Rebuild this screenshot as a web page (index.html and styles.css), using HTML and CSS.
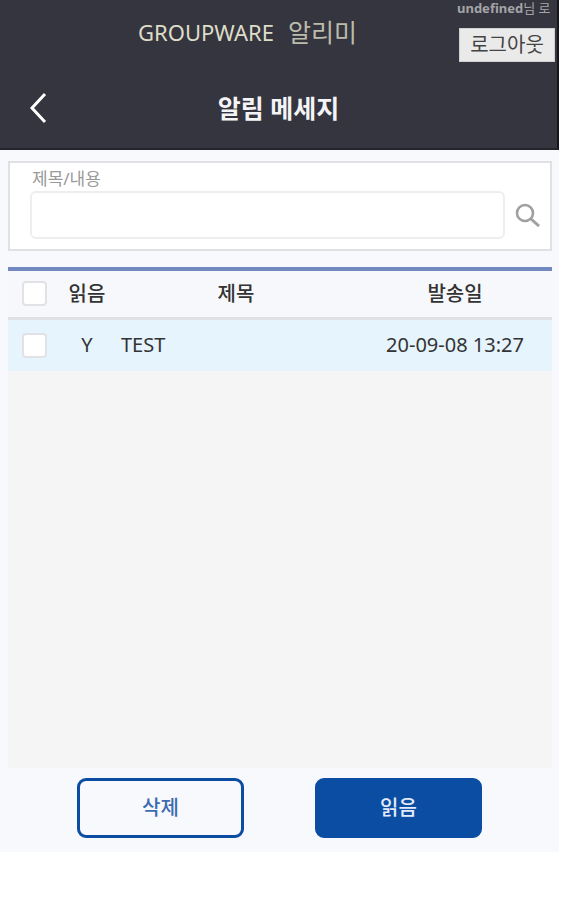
FILE: index.html
```html
<!DOCTYPE html>
<html lang="ko">
<head>
  <meta charset="UTF-8" />
  <meta name="viewport" content="width=device-width, initial-scale=1.0"/>
  <title>GROUPWARE 알리미</title>
  <link rel="stylesheet" href="styles.css">
</head>
<body>

<div class="app">
  <header class="header">
    <div class="top-bar">
      <div class="brand"><span>GROUPWARE</span><span class="brand-sub">알리미</span></div>
      <div class="account">
        <div class="account-name"><b>undefined</b>님 로</div>
        <button type="button" class="logout-button">로그아웃</button>
      </div>
    </div>
    <div class="title-bar">
      <button type="button" class="back-button" aria-label="뒤로">
        <svg width="20" height="32" viewBox="0 0 20 32" fill="none" stroke="#ffffff" stroke-width="3">
          <path d="M17 2 L4 16 L17 30"/>
        </svg>
      </button>
      <h1>알림 메세지</h1>
    </div>
  </header>

  <main class="content">
    <form class="search-box">
      <label for="keyword">제목/내용</label>
      <div class="search-row">
        <input type="text" id="keyword">
        <button type="button" class="search-button" aria-label="검색">
          <svg width="26" height="24" viewBox="0 0 26 24" fill="none" stroke="#a0a0a0">
            <circle cx="10" cy="10" r="8" stroke-width="2.6"/>
            <path d="M15.5 15.5 L24 23" stroke-width="3"/>
          </svg>
        </button>
      </div>
    </form>

    <div class="list">
      <table class="message-table">
        <thead>
          <tr>
            <th class="col-check"><input type="checkbox" aria-label="전체 선택"></th>
            <th class="col-read">읽음</th>
            <th>제목</th>
            <th class="col-date">발송일</th>
          </tr>
        </thead>
        <tbody>
          <tr>
            <td><input type="checkbox" aria-label="TEST 선택"></td>
            <td>Y</td>
            <td class="subject">TEST</td>
            <td>20-09-08 13:27</td>
          </tr>
        </tbody>
      </table>
    </div>
  </main>

  <footer class="actions">
    <button type="button" class="delete-button">삭제</button>
    <button type="button" class="read-button">읽음</button>
  </footer>
</div>

</body>
</html>
```

FILE: styles.css
```css
:root {
  --header-bg: #35353f;
  --app-bg: #f7f9fd;
  --list-bg: #f5f5f5;
  --row-bg: #e6f4fe;
  --brand-color: #deddc8;
  --primary: #0b4da2;
  --line: #dfe1e3;
}

* {
  box-sizing: border-box;
}

body {
  margin: 0;
  min-height: 100vh;
  padding: 0 2px 48px 0;
  display: flex;
  flex-direction: column;
  background-color: #ffffff;
  font-family: 'Noto Sans', 'Noto Sans CJK KR', sans-serif;
  font-size: 20px;
  color: #333;
}

button,
input {
  margin: 0;
  font-family: inherit;
}

.app {
  flex: 1;
  display: flex;
  flex-direction: column;
  background-color: var(--app-bg);
}

.header {
  height: 150px;
  background-color: var(--header-bg);
  border-right: 2px solid #15151b;
  border-bottom: 2px solid #24242c;
}

.top-bar {
  height: 64px;
  display: flex;
  padding-left: 38px;
}

.brand {
  flex: 1;
  display: flex;
  justify-content: center;
  align-items: center;
  gap: 14px;
  font-size: 22px;
  color: var(--brand-color);
}

.brand-sub {
  font-size: 25px;
  line-height: 32px;
  color: #bdbbab;
}

.account {
  width: 100px;
}

.account-name {
  height: 28px;
  line-height: 16px;
  font-size: 13px;
  white-space: nowrap;
  color: #a4a4a8;
}

.logout-button {
  display: block;
  width: 96px;
  height: 34px;
  margin-left: 2px;
  padding: 0;
  border: 1px solid #d0d0d0;
  background-color: #eaeaea;
  color: #444;
  font-size: 20px;
  line-height: 30px;
  cursor: pointer;
}

.title-bar {
  display: grid;
  grid-template-columns: 48px 1fr 48px;
  align-items: center;
  height: 88px;
}

.back-button {
  justify-self: end;
  padding: 0;
  border: none;
  background: none;
  line-height: 0;
  cursor: pointer;
}

.title-bar h1 {
  margin: 0;
  text-align: center;
  font-size: 25px;
  font-weight: bold;
  line-height: 32px;
  color: #f4f4f6;
}

.content {
  flex: 1;
  display: flex;
  flex-direction: column;
  gap: 16px;
  padding: 11px 7px 0 8px;
}

.search-box {
  padding: 4px 9px 10px 20px;
  border: 2px solid var(--line);
  background-color: #ffffff;
}

.search-box label {
  display: block;
  padding-left: 2px;
  font-size: 17px;
  line-height: 24px;
  color: #999;
}

.search-row {
  display: flex;
  align-items: center;
  gap: 10px;
}

.search-row input {
  flex: 1;
  min-width: 0;
  height: 48px;
  padding: 0 12px;
  border: 2px solid #eeeeee;
  border-radius: 6px;
  background-color: #ffffff;
  font-size: 20px;
}

.search-button {
  padding: 0;
  border: none;
  background: none;
  line-height: 0;
  cursor: pointer;
}

.list {
  flex: 1;
  border-top: 4px solid #7189bf;
  background-color: var(--list-bg);
}

.message-table {
  width: 100%;
  table-layout: fixed;
  border-collapse: collapse;
  line-height: 24px;
}

.message-table th,
.message-table td {
  padding: 0;
  text-align: center;
}

.message-table th {
  height: 47px;
  border-bottom: 3px solid var(--line);
  background-color: #f7f8fb;
  font-weight: 500;
}

.message-table td {
  height: 53px;
  background-color: var(--row-bg);
}

.message-table td.subject {
  padding-left: 7px;
  text-align: left;
}

.col-check {
  width: 52px;
}

.col-read {
  width: 54px;
}

.col-date {
  width: 194px;
}

.message-table input {
  appearance: none;
  display: block;
  width: 25px;
  height: 25px;
  margin: 0 auto;
  border: 2px solid #e2e2e6;
  border-radius: 4px;
  background-color: #ffffff;
}

.message-table input:checked {
  background-color: var(--primary);
}

.actions {
  display: flex;
  justify-content: center;
  gap: 71px;
  padding: 10px 0 14px;
}

.actions button {
  width: 167px;
  height: 60px;
  padding: 0;
  border: 3px solid var(--primary);
  border-radius: 9px;
  font-size: 20px;
  font-weight: 500;
  line-height: 24px;
  cursor: pointer;
}

.actions .delete-button {
  background-color: var(--app-bg);
  color: #3c6bb0;
}

.actions .read-button {
  background-color: var(--primary);
  color: #e3ebfa;
}
```
